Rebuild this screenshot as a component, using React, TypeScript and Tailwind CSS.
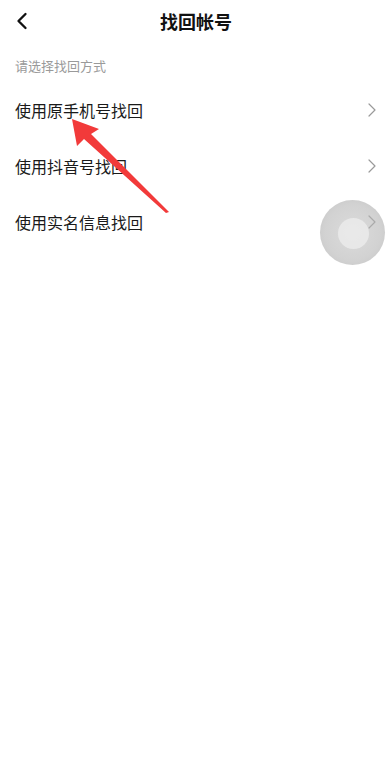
import { ChevronLeft } from "lucide-react";

const options = ["使用原手机号找回", "使用抖音号找回", "使用实名信息找回"];

const RowChevron = () => (
  <svg width="8" height="14" viewBox="0 0 8 14" fill="none">
    <path d="M1 1l6 6-6 6" stroke="#9a9a9a" strokeWidth="1.2" strokeLinecap="round" strokeLinejoin="round" />
  </svg>
);

const App = () => {
  return (
    <div
      className="relative w-[392px] h-[774px] bg-white overflow-hidden"
      style={{ fontFamily: '"Noto Sans CJK SC", "Noto Sans", sans-serif' }}
    >
      {/* header */}
      <div className="relative flex items-center justify-center h-[41px]">
        <ChevronLeft className="absolute left-[8px] top-[7px]" size={28} strokeWidth={2} color="#111" />
        <h1 className="text-[18px] font-bold text-[#111] leading-none">找回帐号</h1>
      </div>

      <p className="mt-[18px] px-[15px] text-[13px] text-[#9a9a9a] leading-none">请选择找回方式</p>

      <ul className="mt-[10px]">
        {options.map((label) => (
          <li key={label} className="flex items-center justify-between h-[56px] pl-[15px] pr-[16px]">
            <span className="text-[16px] text-[#1a1a1a]">{label}</span>
            <RowChevron />
          </li>
        ))}
      </ul>

      {/* red annotation arrow */}
      <svg className="absolute left-0 top-0 pointer-events-none" width="392" height="774">
        <polygon points="72,119 99,129 91,134 169,212 166,213 84,139 77,146" fill="#f23a3a" />
      </svg>

      {/* floating assistive button */}
      <div className="absolute left-[320px] top-[200px] w-[65px] h-[65px] rounded-full bg-[radial-gradient(circle,rgba(190,190,190,0.55)_0%,rgba(180,180,180,0.6)_60%,rgba(170,170,170,0.7)_100%)] flex items-center justify-center">
        <div className="w-[31px] h-[31px] rounded-full bg-[#ececec]/80 translate-x-[1px] translate-y-[1px]" />
      </div>
    </div>
  );
};

export default App;
